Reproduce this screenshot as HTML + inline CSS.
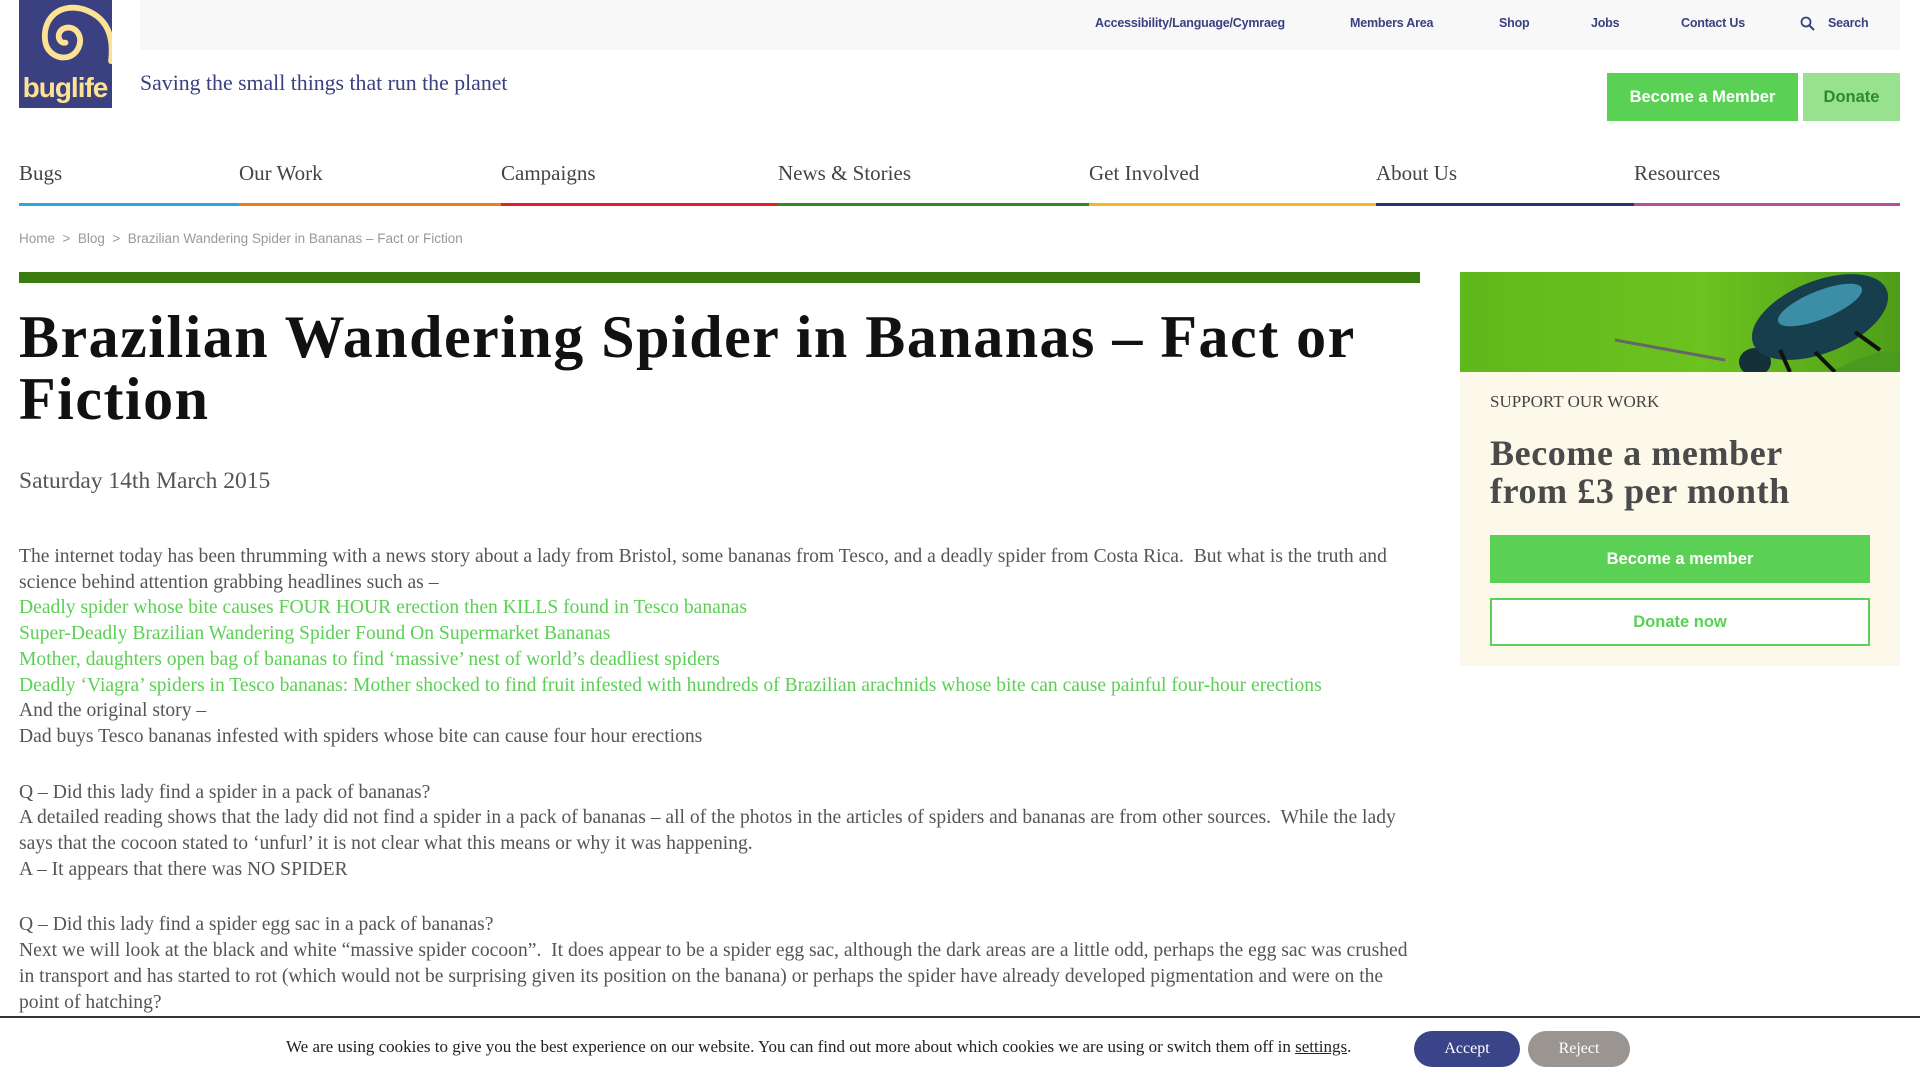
<!DOCTYPE html>
<html><head><meta charset="utf-8">
<style>
*{margin:0;padding:0;box-sizing:border-box}
body{width:1920px;height:1080px;overflow:hidden;background:#fff;font-family:"Liberation Serif",serif;color:#4a4a4a;position:relative}
.a{position:absolute;white-space:nowrap}
.sans{font-family:"Liberation Sans",sans-serif}
.top{left:140px;top:0;width:1760px;height:50px;background:#f8f8f8}
.tl{top:16px;font-size:12.5px;font-weight:bold;color:#3a4080;font-family:"Liberation Sans",sans-serif;letter-spacing:-0.2px}
.nav{top:161px;font-size:21px;color:#444}
.ul{top:203px;height:3px}
.body p{font-size:19.6px;line-height:25.7px;color:#555}
.body p.g{color:#5ccf55}
</style></head><body>
<div class="a" style="left:19px;top:0;width:93px;height:108px;background:#3a4080">
<svg width="93" height="108" viewBox="0 0 93 108"><g fill="none" stroke="#fde293" stroke-linecap="round"><path d="M97 63 C99 45 98 20 70 10 C45 2 26 18 29 42 C31 60 55 66 63 50 C70 36 58 24 47 30 C40 35 43 45 50 44" stroke-width="6" transform="translate(-2,0) scale(0.97)"/></g><text x="46" y="97" text-anchor="middle" font-family="Liberation Sans,sans-serif" font-weight="bold" font-size="28" fill="#fde293" letter-spacing="-1">buglife</text></svg></div>
<div class="a top"></div>
<div class="a tl" style="left:1095px">Accessibility/Language/Cymraeg</div>
<div class="a tl" style="left:1350px">Members Area</div>
<div class="a tl" style="left:1499px">Shop</div>
<div class="a tl" style="left:1591px">Jobs</div>
<div class="a tl" style="left:1681px">Contact Us</div>
<svg class="a" style="left:1800px;top:16px" width="15" height="15" viewBox="0 0 15 15"><circle cx="6" cy="6" r="4.5" fill="none" stroke="#3a4080" stroke-width="1.8"/><path d="M9.5 9.5L14 14" stroke="#3a4080" stroke-width="2"/></svg>
<div class="a tl" style="left:1828px">Search</div>
<div class="a" style="left:140px;top:71px;font-size:21.8px;color:#3a4080">Saving the small things that run the planet</div>
<div class="a sans" style="left:1607px;top:73px;width:191px;height:48px;background:#5ad155;color:#fff;font-weight:bold;font-size:16.5px;line-height:48px;text-align:center">Become a Member</div>
<div class="a sans" style="left:1803px;top:73px;width:97px;height:48px;background:#98e28f;color:#2e8a2a;font-weight:bold;font-size:16.5px;line-height:48px;text-align:center">Donate</div>
<div class="a nav" style="left:19px">Bugs</div>
<div class="a nav" style="left:239px">Our Work</div>
<div class="a nav" style="left:501px">Campaigns</div>
<div class="a nav" style="left:778px">News &amp; Stories</div>
<div class="a nav" style="left:1089px">Get Involved</div>
<div class="a nav" style="left:1376px">About Us</div>
<div class="a nav" style="left:1634px">Resources</div>
<div class="a ul" style="left:19px;width:220px;background:#29a8e0"></div>
<div class="a ul" style="left:239px;width:262px;background:#ef7d1e"></div>
<div class="a ul" style="left:501px;width:277px;background:#e3202a"></div>
<div class="a ul" style="left:778px;width:311px;background:#2c8a1f"></div>
<div class="a ul" style="left:1089px;width:287px;background:#f5b81e"></div>
<div class="a ul" style="left:1376px;width:258px;background:#2b2f78"></div>
<div class="a ul" style="left:1634px;width:266px;background:#b34fa3"></div>
<div class="a sans" style="left:19px;top:231px;font-size:13.5px;color:#999">Home &nbsp;&gt;&nbsp; Blog &nbsp;&gt;&nbsp; Brazilian Wandering Spider in Bananas – Fact or Fiction</div>
<div class="a" style="left:19px;top:272px;width:1401px;height:11px;background:#3a7d0e"></div>
<div class="a" style="left:19px;top:306px;font-size:60px;font-weight:bold;line-height:62px;color:#111;letter-spacing:1.5px">Brazilian Wandering Spider in Bananas – Fact or<br>Fiction</div>
<div class="a" style="left:19px;top:468px;font-size:23.5px;color:#555">Saturday 14th March 2015</div>
<div class="a body" style="left:19px;top:544px">
<p>The internet today has been thrumming with a news story about a lady from Bristol, some bananas from Tesco, and a deadly spider from Costa Rica.&nbsp; But what is the truth and<br>science behind attention grabbing headlines such as –</p>
<p class="g">Deadly spider whose bite causes FOUR HOUR erection then KILLS found in Tesco bananas</p>
<p class="g">Super-Deadly Brazilian Wandering Spider Found On Supermarket Bananas</p>
<p class="g">Mother, daughters open bag of bananas to find ‘massive’ nest of world’s deadliest spiders</p>
<p class="g">Deadly ‘Viagra’ spiders in Tesco bananas: Mother shocked to find fruit infested with hundreds of Brazilian arachnids whose bite can cause painful four-hour erections</p>
<p>And the original story –<br>Dad buys Tesco bananas infested with spiders whose bite can cause four hour erections</p>
<p style="margin-top:30px">Q – Did this lady find a spider in a pack of bananas?<br>A detailed reading shows that the lady did not find a spider in a pack of bananas – all of the photos in the articles of spiders and bananas are from other sources.&nbsp; While the lady<br>says that the cocoon stated to ‘unfurl’ it is not clear what this means or why it was happening.<br>A – It appears that there was NO SPIDER</p>
<p style="margin-top:30px">Q – Did this lady find a spider egg sac in a pack of bananas?<br>Next we will look at the black and white “massive spider cocoon”.&nbsp; It does appear to be a spider egg sac, although the dark areas are a little odd, perhaps the egg sac was crushed<br>in transport and has started to rot (which would not be surprising given its position on the banana) or perhaps the spider have already developed pigmentation and were on the<br>point of hatching?</p>
</div>
<div class="a" style="left:1460px;top:272px;width:440px;height:100px;background:linear-gradient(90deg,#5fb81c,#6cc21f 55%,#4f9e1a);overflow:hidden">
<svg width="440" height="100" viewBox="0 0 440 100"><path d="M155 68 L265 88" stroke="#666" stroke-width="3"/><path d="M370 100 Q420 75 440 80 L440 100Z" fill="#4a9a20"/><ellipse cx="295" cy="90" rx="16" ry="14" fill="#16303a"/><ellipse cx="360" cy="45" rx="72" ry="36" transform="rotate(-22 360 45)" fill="#163e4c"/><ellipse cx="360" cy="33" rx="45" ry="14" transform="rotate(-22 360 33)" fill="#3c8ea6"/><path d="M320 78 L330 100 M355 80 L375 100 M395 60 L420 78" stroke="#111" stroke-width="4"/></svg></div>
<div class="a" style="left:1460px;top:372px;width:440px;height:294px;background:#fdf9ea"></div>
<div class="a" style="left:1490px;top:392px;font-size:17px;color:#444">SUPPORT OUR WORK</div>
<div class="a" style="left:1490px;top:434px;font-size:36px;font-weight:bold;line-height:38px;color:#4a4a4a;letter-spacing:0.6px">Become a member<br>from £3 per month</div>
<div class="a sans" style="left:1490px;top:535px;width:380px;height:48px;background:#5ad155;color:#fff;font-weight:bold;font-size:16.5px;line-height:48px;text-align:center">Become a member</div>
<div class="a sans" style="left:1490px;top:598px;width:380px;height:48px;background:#fff;border:2px solid #5ad155;color:#5ad155;font-weight:bold;font-size:16.5px;line-height:44px;text-align:center">Donate now</div>
<div class="a" style="left:0;top:1016px;width:1920px;height:64px;background:#fff;border-top:2px solid #333"></div>
<div class="a" style="left:286px;top:1037px;font-size:17px;color:#222">We are using cookies to give you the best experience on our website. You can find out more about which cookies we are using or switch them off in <u>settings</u>.</div>
<div class="a" style="left:1414px;top:1031px;width:106px;height:36px;border-radius:18px;background:#3a4589;color:#fff;font-size:16px;line-height:36px;text-align:center">Accept</div>
<div class="a" style="left:1528px;top:1031px;width:102px;height:36px;border-radius:18px;background:#9a9590;color:#fff;font-size:16px;line-height:36px;text-align:center">Reject</div>
</body></html>
